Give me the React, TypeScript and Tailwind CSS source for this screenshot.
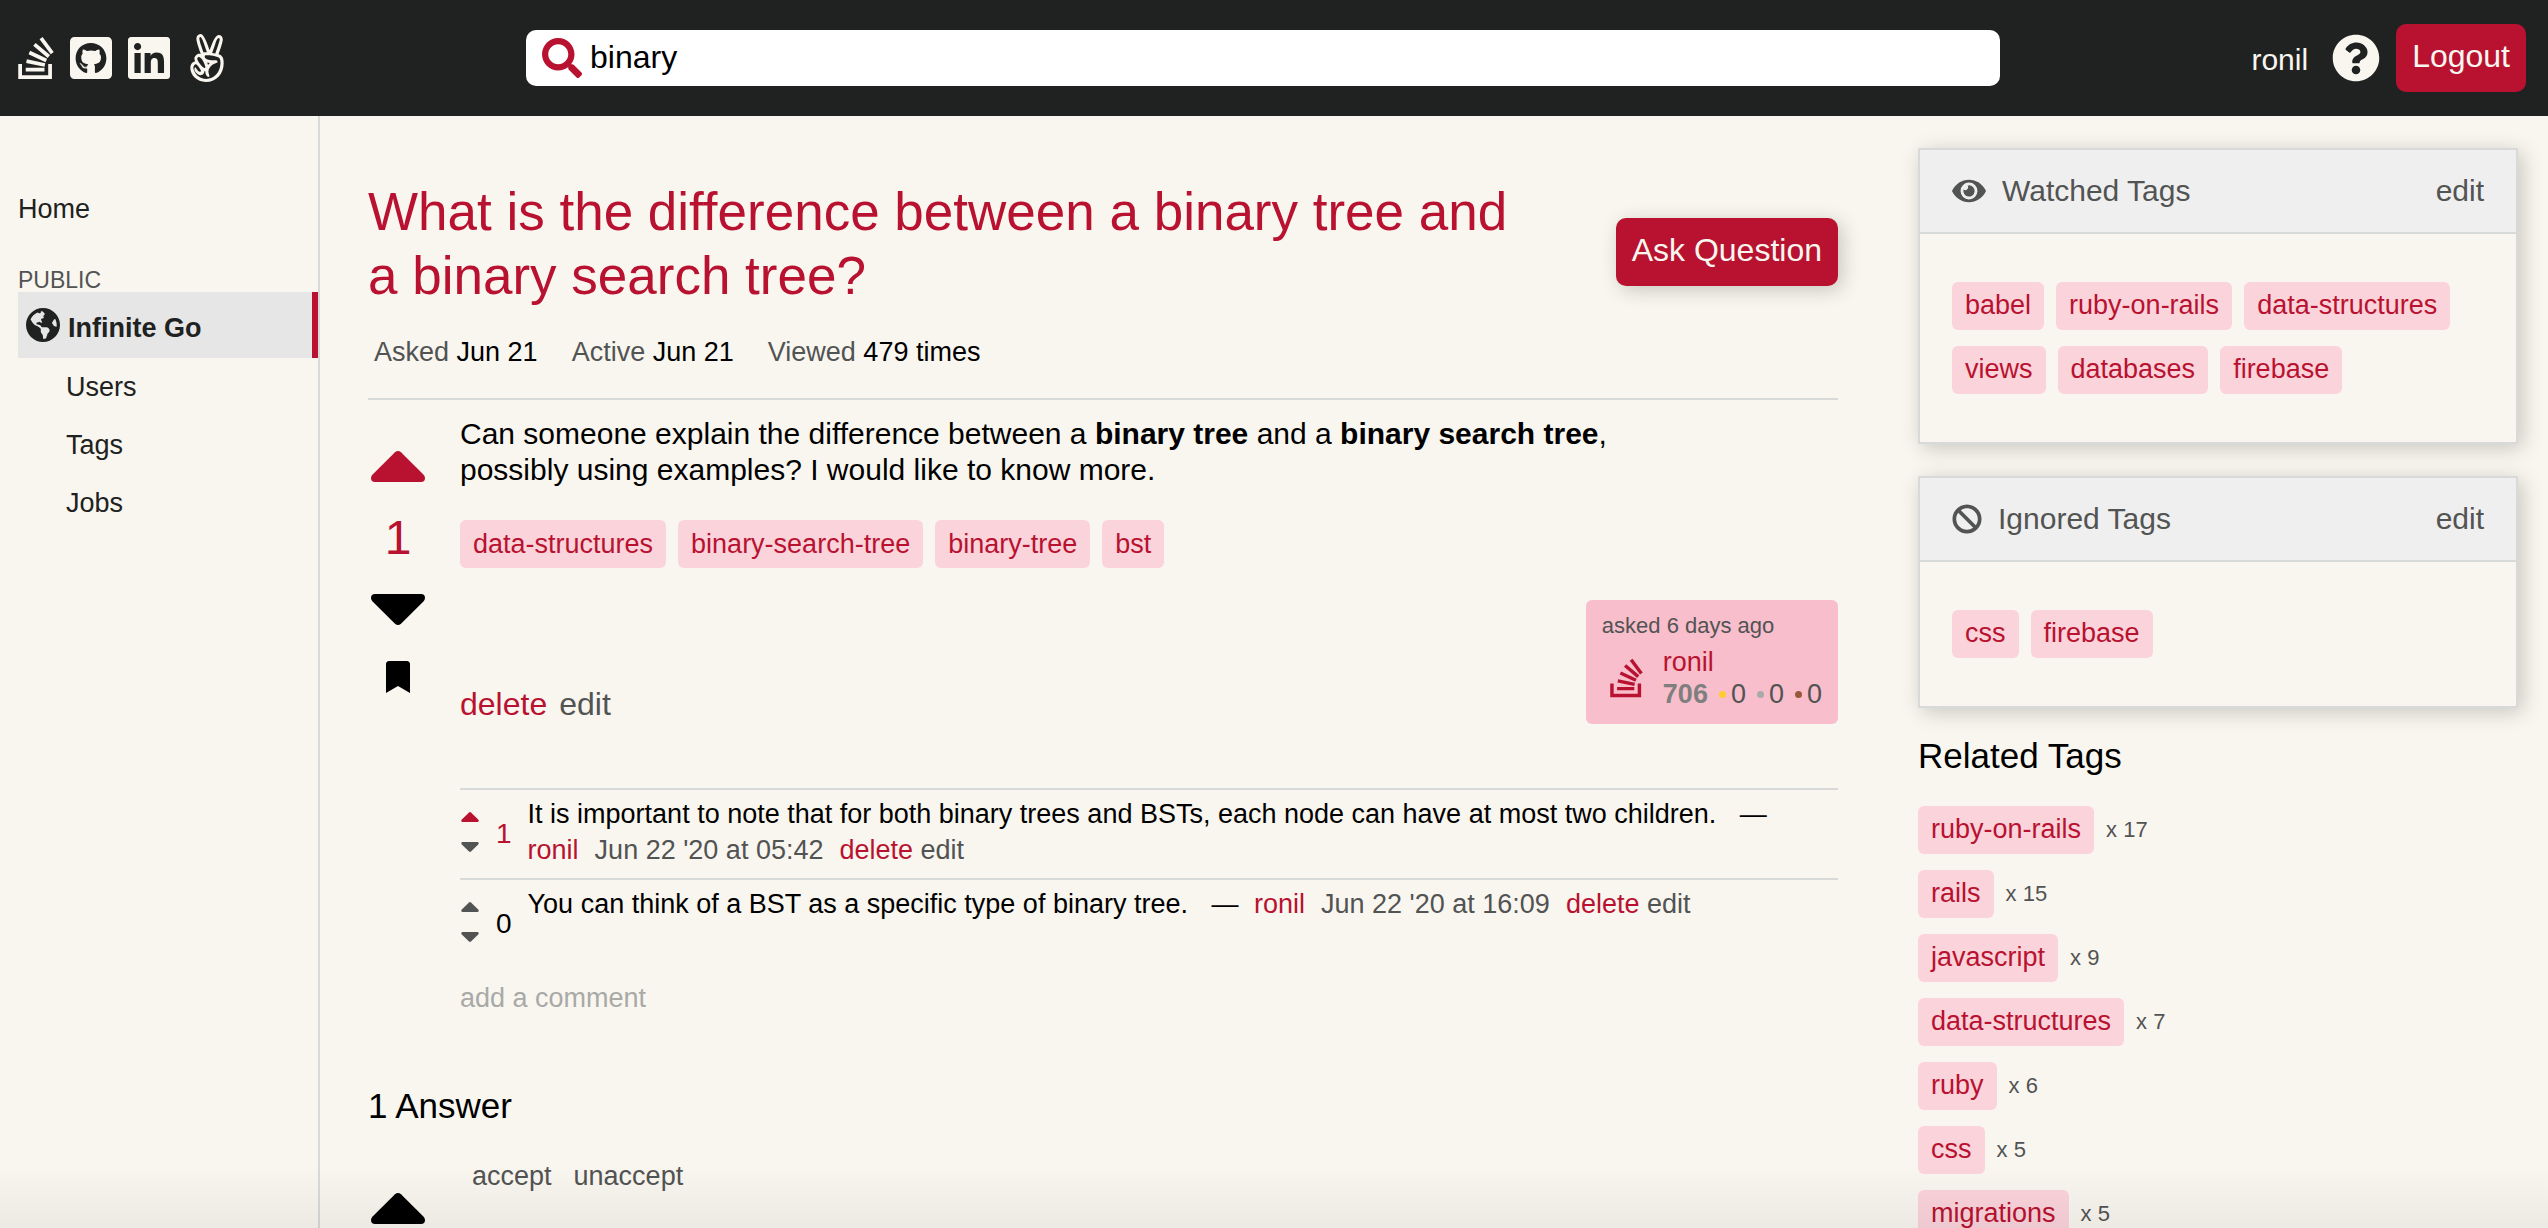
import {
  FaAngellist,
  FaBan,
  FaBookmark,
  FaEye,
  FaGithubSquare,
  FaGlobeAmericas,
  FaLinkedin,
  FaQuestionCircle,
  FaSearch,
  FaStackOverflow,
} from "react-icons/fa";
import type { ReactNode } from "react";

const questionTags = ["data-structures", "binary-search-tree", "binary-tree", "bst"];
const watchedTags = ["babel", "ruby-on-rails", "data-structures", "views", "databases", "firebase"];
const ignoredTags = ["css", "firebase"];
const relatedTags = [
  { name: "ruby-on-rails", count: 17 },
  { name: "rails", count: 15 },
  { name: "javascript", count: 9 },
  { name: "data-structures", count: 7 },
  { name: "ruby", count: 6 },
  { name: "css", count: 5 },
  { name: "migrations", count: 5 },
];

function Caret({ className }: { className: string }) {
  return (
    <svg viewBox="0 0 54 31" fill="currentColor" aria-hidden="true" className={className}>
      <path d="M24 1.3Q27 -1.3 30 1.3L52.4 23.6Q54 25.3 54 27Q54 31 50 31H4Q0 31 0 27Q0 25.3 1.6 23.6Z" />
    </svg>
  );
}

function Tag({ name, raised = false }: { name: string; raised?: boolean }) {
  return (
    <a
      href="#"
      className={`flex h-12 items-center rounded-md bg-[#fbd3db] px-[13px] text-[27px] leading-8 text-[#b81230] ${raised ? "pb-0.5" : ""}`}
    >
      {name}
    </a>
  );
}

function Header() {
  return (
    <header className="flex h-[116px] shrink-0 items-center bg-[#202221] pr-[22px] pl-[18px] text-[#f9f6ef]">
      <nav aria-label="Social links" className="flex w-[508px] items-center gap-4">
        <a href="#" aria-label="Stack Overflow"><FaStackOverflow className="h-12 w-9" /></a>
        <a href="#" aria-label="GitHub"><FaGithubSquare className="h-12 w-[42px]" /></a>
        <a href="#" aria-label="LinkedIn"><FaLinkedin className="h-12 w-[42px]" /></a>
        <a href="#" aria-label="AngelList"><FaAngellist className="h-12 w-[42px]" /></a>
      </nav>
      <form className="flex h-14 flex-1 items-center gap-2 rounded-[10px] bg-white px-4" onSubmit={(e) => e.preventDefault()}>
        <button type="submit" aria-label="Search" className="text-[#b81230]">
          <FaSearch className="size-10" />
        </button>
        <input
          type="text"
          aria-label="Search questions"
          defaultValue="binary"
          className="min-w-0 flex-1 bg-transparent pb-0.5 text-[32px] leading-10 text-black outline-none"
        />
      </form>
      <div className="flex w-[526px] items-center justify-end">
        <a href="#" className="mr-6 pt-1 text-[30px] leading-9">ronil</a>
        <a href="#" aria-label="Help" className="mr-4"><FaQuestionCircle className="size-12" /></a>
        <button type="button" className="h-[68px] rounded-[10px] bg-[#b81230] px-4 pb-1 text-[32px] leading-10">Logout</button>
      </div>
    </header>
  );
}

function Sidebar() {
  return (
    <aside className="w-80 shrink-0 border-r-2 border-[#d8dad9] pt-16 pl-[18px] text-[27px] text-[#202221]">
      <nav aria-label="Main">
        <a href="#" className="flex h-[58px] items-center">Home</a>
        <p className="mt-[30px] text-[23px] leading-6 text-[#525353]">PUBLIC</p>
        <a href="#" aria-current="page" className="flex h-[66px] items-center gap-2 border-r-6 border-[#b81230] bg-[#e6e6e6] pl-2 font-bold">
          <FaGlobeAmericas className="h-9 w-[34px]" />
          <span className="pt-1.5">Infinite Go</span>
        </a>
        <ul className="pl-12">
          {["Users", "Tags", "Jobs"].map((item) => (
            <li key={item}><a href="#" className="flex h-[58px] items-center">{item}</a></li>
          ))}
        </ul>
      </nav>
    </aside>
  );
}

function Stat({ label, value }: { label: string; value: string }) {
  return (
    <span><span className="text-[#525353]">{label}</span> {value}</span>
  );
}

function Badge({ color }: { color: string }) {
  return (
    <span className="flex items-center gap-[5px]">
      <span className={`size-[7px] rounded-full ${color}`} />0
    </span>
  );
}

function UserCard() {
  return (
    <div className="rounded-md bg-[#f8becb] px-4 pt-3 pb-3.5 text-[27px] leading-8 text-[#525353]">
      <p className="text-[22px] leading-7">asked 6 days ago</p>
      <div className="flex pt-1.5">
        <FaStackOverflow className="mt-2.5 mr-5 ml-2 h-11 w-[33px] text-[#b81230]" />
        <div>
          <a href="#" className="block text-[#b81230]">ronil</a>
          <div className="flex gap-[11px]">
            <span className="font-bold text-[#7f7f7f]">706</span>
            <Badge color="bg-[#ffcc2e]" />
            <Badge color="bg-[#a8a9a9]" />
            <Badge color="bg-[#98593a]" />
          </div>
        </div>
      </div>
    </div>
  );
}

function Comment({ score, voted, date, children }: { score: number; voted?: boolean; date: string; children: ReactNode }) {
  return (
    <li className="flex min-h-[90px] border-t-2 border-[#d8dad9] text-[27px] leading-9">
      <div className="flex w-5 flex-col items-center gap-5 pt-[22px] text-[#525353]">
        <button type="button" aria-label="Upvote comment" className={voted ? "text-[#b81230]" : ""}>
          <Caret className="h-[10px] w-[18px]" />
        </button>
        <button type="button" aria-label="Downvote comment">
          <Caret className="h-[10px] w-[18px] rotate-180" />
        </button>
      </div>
      <span className={`px-4 pt-[26px] text-[28px] ${voted ? "text-[#b81230]" : "text-black"}`}>{score}</span>
      <p className="min-w-0 flex-1 pt-1.5 pr-4">
        {children}
        <span className="mr-2 ml-4"> —</span>{" "}
        <a href="#" className="mr-4 inline-block text-[#b81230]">ronil</a>
        <span className="mr-4 text-[#525353]">{date}</span>
        <button type="button" className="text-[#b81230]">delete</button>{" "}
        <button type="button" className="text-[#525353]">edit</button>
      </p>
    </li>
  );
}

function Question() {
  return (
    <article className="flex gap-8 border-t-2 border-[#d8dad9] pt-4">
      <div className="flex w-15 shrink-0 flex-col items-center gap-9 pt-[35px]">
        <button type="button" aria-label="Upvote" className="text-[#b81230]">
          <Caret className="h-[31px] w-[54px]" />
        </button>
        <span className="text-[48px] leading-10 text-[#b81230]">1</span>
        <button type="button" aria-label="Downvote">
          <Caret className="h-[31px] w-[54px] rotate-180" />
        </button>
        <button type="button" aria-label="Bookmark"><FaBookmark className="h-8 w-6" /></button>
      </div>
      <div className="min-w-0 flex-1">
        <p className="text-[30px] leading-9">
          Can someone explain the difference between a <strong>binary tree</strong> and a{" "}
          <strong>binary search tree</strong>,<br />
          possibly using examples? I would like to know more.
        </p>
        <div className="mt-8 flex flex-wrap gap-x-3 gap-y-4">
          {questionTags.map((t) => <Tag key={t} name={t} />)}
        </div>
        <div className="mt-8 flex items-end justify-between">
          <div className="flex gap-3 pb-0.5 text-[32px] leading-9">
            <button type="button" className="text-[#b81230]">delete</button>
            <button type="button" className="text-[#525353]">edit</button>
          </div>
          <UserCard />
        </div>
        <ul className="mt-16">
          <Comment score={1} voted date="Jun 22 '20 at 05:42">
            It is important to note that for both binary trees and BSTs, each node can have at most two children.
          </Comment>
          <Comment score={0} date="Jun 22 '20 at 16:09">
            You can think of a BST as a specific type of binary tree.
          </Comment>
        </ul>
        <button type="button" className="mt-3 text-[27px] leading-9 text-[#a9a9a7]">add a comment</button>
      </div>
    </article>
  );
}

function Answers() {
  return (
    <section className="pt-[70px]">
      <h2 className="text-[35px] leading-10">1 Answer</h2>
      <article className="flex gap-8 pt-8">
        <div className="flex w-15 shrink-0 flex-col items-center pt-[35px]">
          <button type="button" aria-label="Upvote answer">
            <Caret className="h-[31px] w-[54px]" />
          </button>
        </div>
        <div className="min-w-0 flex-1">
          <div className="flex gap-[22px] px-3 text-[27px] leading-9 text-[#525353]">
            <button type="button">accept</button>
            <button type="button">unaccept</button>
          </div>
        </div>
      </article>
    </section>
  );
}

function TagPanel({ icon, title, tags }: { icon: ReactNode; title: string; tags: string[] }) {
  return (
    <section className="border-2 border-[#d8dad9] shadow-[4px_4px_20px_rgba(0,0,0,0.2)]">
      <div className="flex h-21 items-center gap-4 border-b-2 border-[#d8dad9] bg-[#efefef] px-8 text-[30px] leading-9 text-[#525353]">
        {icon}
        <h2 className="flex-1">{title}</h2>
        <button type="button">edit</button>
      </div>
      <div className="flex flex-wrap gap-x-3 gap-y-4 bg-[#f9f6ef] px-8 py-12">
        {tags.map((t) => <Tag key={t} name={t} raised />)}
      </div>
    </section>
  );
}

function RightRail() {
  return (
    <aside className="flex w-[600px] shrink-0 flex-col gap-8 pt-8">
      <TagPanel icon={<FaEye className="h-[30px] w-[34px]" />} title="Watched Tags" tags={watchedTags} />
      <TagPanel icon={<FaBan className="size-[30px]" />} title="Ignored Tags" tags={ignoredTags} />
      <section>
        <h2 className="-mt-1 text-[35px] leading-10">Related Tags</h2>
        <ul className="flex flex-col gap-4 pt-[30px]">
          {relatedTags.map((t) => (
            <li key={t.name} className="flex items-center gap-3">
              <Tag name={t.name} raised />
              <span className="pb-0.5 text-[22px] text-[#525353]">x {t.count}</span>
            </li>
          ))}
        </ul>
      </section>
    </aside>
  );
}

export default function App() {
  return (
    <div className="relative flex h-screen flex-col overflow-hidden bg-[#f9f6ef] font-['Liberation_Sans',Arial,sans-serif] text-black">
      <Header />
      <div className="flex min-h-0 flex-1 pr-[30px]">
        <Sidebar />
        <main className="min-w-0 flex-1 pt-16 pr-20 pl-12">
          <div className="flex items-start justify-between">
            <h1 className="w-4/5 text-[53px] leading-16 text-[#b81230]">
              What is the difference between a binary tree and a binary search tree?
            </h1>
            <button type="button" className="mt-[38px] h-[68px] rounded-[10px] bg-[#b81230] px-4 pb-1 text-[32px] whitespace-nowrap text-[#f9f6ef] shadow-[4px_4px_20px_rgba(0,0,0,0.2)]">
              Ask Question
            </button>
          </div>
          <div className="flex gap-[34px] px-1.5 pt-[26px] pb-7 text-[27px] leading-9">
            <Stat label="Asked" value="Jun 21" />
            <Stat label="Active" value="Jun 21" />
            <Stat label="Viewed" value="479 times" />
          </div>
          <Question />
          <Answers />
        </main>
        <RightRail />
      </div>
      <div className="pointer-events-none absolute inset-x-0 bottom-0 h-16 bg-linear-to-t from-black/5 to-transparent" />
    </div>
  );
}
